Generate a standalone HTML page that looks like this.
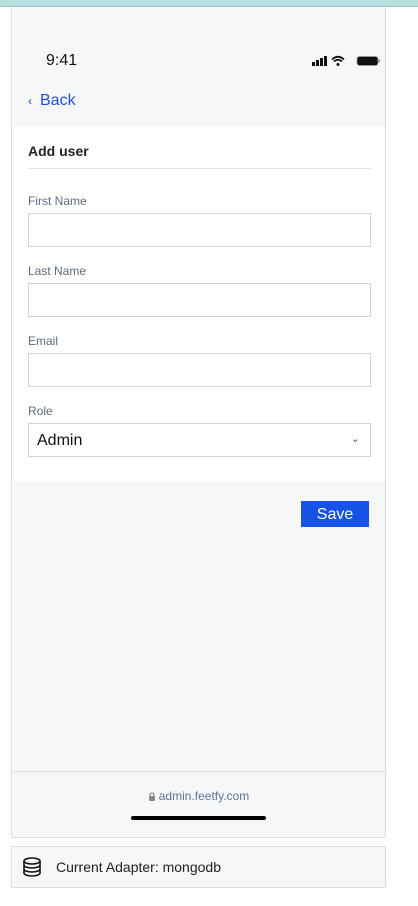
<!DOCTYPE html>
<html><head><meta charset="utf-8"><style>
*{box-sizing:border-box;margin:0;padding:0}
body{width:418px;height:906px;background:#fff;font-family:"Liberation Sans","DejaVu Sans",sans-serif;position:relative;overflow:hidden}
.top{position:absolute;left:0;top:0;width:418px;height:7px;background:#b6dfe2;border-bottom:1px solid #9cc5c9}
.phone{position:absolute;left:11px;top:7px;width:375px;height:831px;background:#f6f7f9;border:1px solid #d9dee5;border-top:none}
.time{position:absolute;left:34px;top:45px;font-size:16px;color:#111}
.back{position:absolute;left:16px;top:85px;font-size:16px;color:#1d4fd8}
.card{position:absolute;left:0;top:120px;width:373px;height:354px;background:#fff}
.title{position:absolute;left:16px;top:16px;font-size:14px;font-weight:bold;color:#222}
.hr{position:absolute;left:16px;top:41px;width:343px;height:1px;background:#dfe3ea}
.lbl{position:absolute;left:16px;font-size:12px;color:#5c6b7e}
.inp{position:absolute;left:16px;width:343px;height:34px;border:1px solid #cfd4db;background:#fff}
.sel{font-size:16px;color:#111;padding:8px 8px}
.save{position:absolute;left:289px;top:494px;width:68px;height:26px;background:#1652e6;color:#fff;font-size:16px;text-align:center;line-height:28px}
.bot{position:absolute;left:0;top:764px;width:373px;height:66px;border-top:1px solid #d9dee5;background:#f6f7f9}
.url{position:absolute;left:0;width:373px;top:17px;text-align:center;font-size:12px;color:#5c7496}
.bar{position:absolute;left:119px;top:44px;width:135px;height:4px;border-radius:2px;background:#000}
.adp{position:absolute;left:11px;top:846px;width:375px;height:42px;border:1px solid #d9dee5;background:#f6f7f9}
</style></head><body>
<div class="top"></div>
<div class="phone">
<div class="time">9:41</div>
<svg style="position:absolute;left:300px;top:48px" width="70" height="12">
<rect x="0" y="7" width="3" height="4" fill="#111"/><rect x="4" y="5" width="3" height="6" fill="#111"/><rect x="8" y="3" width="3" height="8" fill="#111"/><rect x="12" y="1" width="3" height="10" fill="#111"/>
<path d="M20 4.5 Q26 -1 32 4.5 M22 6.5 Q26 3 30 6.5" stroke="#111" stroke-width="1.8" fill="none"/><circle cx="26" cy="9.5" r="1.5" fill="#111"/>
<rect x="45" y="1.5" width="21" height="9" rx="2.5" fill="#111" stroke="#999" stroke-width="0.8"/><rect x="66.5" y="4.5" width="1.5" height="3" fill="#999"/>
</svg>
<div class="back"><span style="font-size:12px;margin-right:8px">‹</span>Back</div>
<div class="card">
<div class="title">Add user</div><div class="hr"></div>
<div class="lbl" style="top:67px">First Name</div><div class="inp" style="top:86px"></div>
<div class="lbl" style="top:137px">Last Name</div><div class="inp" style="top:156px"></div>
<div class="lbl" style="top:207px">Email</div><div class="inp" style="top:226px"></div>
<div class="lbl" style="top:277px">Role</div><div class="inp sel" style="top:296px">Admin<span style="position:absolute;right:10px;top:8px;font-size:11px;color:#666">⌄</span></div>
</div>
<div class="save">Save</div>
<div class="bot"><div class="url"><svg width="8" height="9" viewBox="0 0 8 9" style="margin-right:3px;vertical-align:-1px"><path d="M2 4V3a2 2 0 0 1 4 0v1" stroke="#888" stroke-width="1.2" fill="none"/><rect x="1" y="4" width="6" height="5" rx="1" fill="#888"/></svg>admin.feetfy.com</div><div class="bar"></div></div>
</div>
<div class="adp">
<svg style="position:absolute;left:10px;top:10px" width="20" height="20" viewBox="0 0 20 20" fill="none" stroke="#111" stroke-width="1.6"><ellipse cx="10" cy="4" rx="8" ry="3"/><path d="M2 4v12c0 1.7 3.6 3 8 3s8-1.3 8-3V4M2 8c0 1.7 3.6 3 8 3s8-1.3 8-3M2 12c0 1.7 3.6 3 8 3s8-1.3 8-3"/></svg>
<div style="position:absolute;left:44px;top:12px;font-size:14px;color:#222">Current Adapter: mongodb</div>
</div>
</body></html>
